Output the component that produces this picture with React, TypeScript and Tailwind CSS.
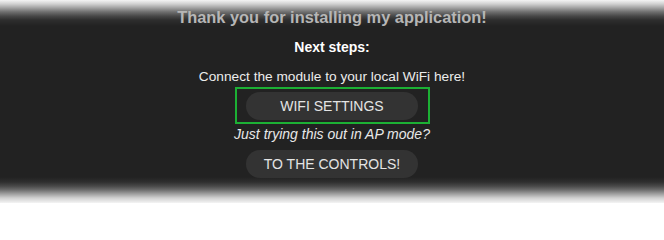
import React from "react";

export default function App() {
  return (
    <div
      className="w-[664px] h-[203px] overflow-hidden flex flex-col items-center bg-[linear-gradient(to_bottom,#f4f4f4_0px,#d0d0d0_4px,#a0a0a0_8px,#6e6e6e_12px,#484848_16px,#2e2e2e_20px,#222222_26px,#222222_177px,#2e2e2e_182px,#484848_186px,#6e6e6e_190px,#a0a0a0_194px,#d0d0d0_198px,#f4f4f4_203px)]"
      style={{ fontFamily: '"Liberation Sans", Arial, sans-serif' }}
    >
      <h1 className="mt-[5px] h-[24px] leading-[24px] text-[16.4px] font-bold text-[#b6b6b6] whitespace-nowrap">
        Thank you for installing my application!
      </h1>
      <p className="mt-[8px] h-[20px] leading-[20px] text-[14px] font-bold text-white whitespace-nowrap">
        Next steps:
      </p>
      <p className="mt-[10px] h-[20px] leading-[20px] text-[13.7px] text-[#ececec] whitespace-nowrap">
        Connect the module to your local WiFi here!
      </p>
      <div className="w-[195px] h-[37px] border-2 border-[#1cb034] pt-[3px] flex justify-center">
        <button className="w-[172px] h-[28px] rounded-full bg-[#333333] text-[14px] leading-[28px] text-[#e4e4e4] whitespace-nowrap">
          WIFI SETTINGS
        </button>
      </div>
      <p className="h-[20px] leading-[20px] text-[14px] italic text-[#e8e8e8] whitespace-nowrap">
        Just trying this out in AP mode?
      </p>
      <button className="mt-[6px] w-[172px] h-[28px] rounded-full bg-[#333333] text-[14px] leading-[28px] text-[#e4e4e4] whitespace-nowrap">
        TO THE CONTROLS!
      </button>
    </div>
  );
}
